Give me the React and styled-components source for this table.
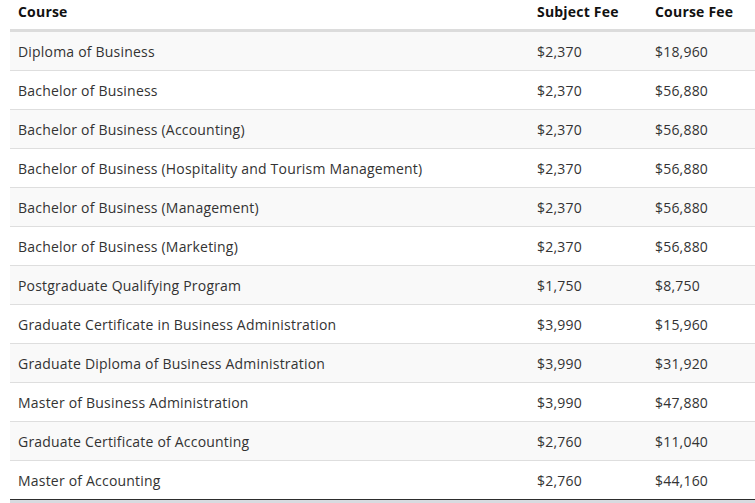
import React from "react";
import styled, { createGlobalStyle } from "styled-components";

const Global = createGlobalStyle`
  html, body { margin: 0; padding: 0; background: #fff; }
  body { font-family: "Open Sans", "Noto Sans", sans-serif; overflow: hidden; }
`;

const Wrap = styled.div`
  padding-left: 10px;
  width: 755px;
  box-sizing: border-box;
`;

const Table = styled.table`
  width: 745px;
  border-collapse: collapse;
  table-layout: fixed;
  font-size: 14px;
  line-height: 20px;
  letter-spacing: 0.2px;
  color: #333;
`;

const Th = styled.th`
  box-sizing: border-box;
  text-align: left;
  font-weight: 700;
  color: #111;
  padding: 2px 8px 7px;
  border-bottom: 3px solid #dcdcdc;
  width: ${(p) => p.$w}px;
  white-space: nowrap;
`;

const Row = styled.tr`
  background: ${(p) => (p.$odd ? "#f9f9f9" : "#fff")};
  border-bottom: 1px solid ${(p) => (p.$last ? "#2d2d2d" : "#dedede")};
`;

const Td = styled.td`
  padding: 10px 8px 8px;
  white-space: nowrap;
`;

const Strip = styled.div`
  height: 3px;
  background: #d8dbe0;
`;

const data = [
  ["Diploma of Business", "$2,370", "$18,960"],
  ["Bachelor of Business", "$2,370", "$56,880"],
  ["Bachelor of Business (Accounting)", "$2,370", "$56,880"],
  ["Bachelor of Business (Hospitality and Tourism Management)", "$2,370", "$56,880"],
  ["Bachelor of Business (Management)", "$2,370", "$56,880"],
  ["Bachelor of Business (Marketing)", "$2,370", "$56,880"],
  ["Postgraduate Qualifying Program", "$1,750", "$8,750"],
  ["Graduate Certificate in Business Administration", "$3,990", "$15,960"],
  ["Graduate Diploma of Business Administration", "$3,990", "$31,920"],
  ["Master of Business Administration", "$3,990", "$47,880"],
  ["Graduate Certificate of Accounting", "$2,760", "$11,040"],
  ["Master of Accounting", "$2,760", "$44,160"],
];

export default function App() {
  return (
    <Wrap>
      <Global />
      <Table>
        <thead>
          <tr>
            <Th $w={519}>Course</Th>
            <Th $w={118}>Subject Fee</Th>
            <Th $w={108}>Course Fee</Th>
          </tr>
        </thead>
        <tbody>
          {data.map((r, i) => (
            <Row key={i} $odd={i % 2 === 0} $last={i === data.length - 1}>
              <Td>{r[0]}</Td>
              <Td>{r[1]}</Td>
              <Td>{r[2]}</Td>
            </Row>
          ))}
        </tbody>
      </Table>
      <Strip />
    </Wrap>
  );
}
